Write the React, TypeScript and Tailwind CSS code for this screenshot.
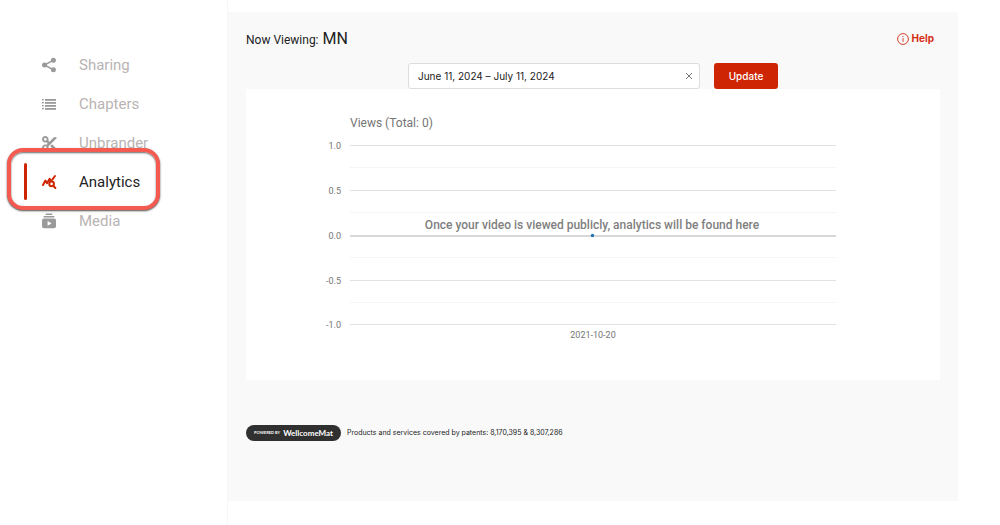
import React from "react";
import { FaScissors } from "react-icons/fa6";

function ShareIcon() {
  return (
    <svg viewBox="0 0 16 16" className="size-4" fill="currentColor" aria-hidden="true">
      <path d="M12.500 3.200L3.500 8l9 4.800" fill="none" stroke="currentColor" strokeWidth="1.500" />
      <circle cx="12.400" cy="3.300" r="2.500" />
      <circle cx="3.500" cy="8" r="2.500" />
      <circle cx="12.400" cy="12.800" r="2.500" />
    </svg>
  );
}

function ChaptersIcon() {
  return (
    <svg viewBox="0 0 16 12" className="h-3 w-4" fill="currentColor" aria-hidden="true">
      {[1, 4, 7, 10].map((y) => (
        <g key={y}>
          <rect x="1" y={y} width="1.8" height="1.4" />
          <rect x="4" y={y} width="11" height="1.8" />
        </g>
      ))}
    </svg>
  );
}

function AnalyticsIcon() {
  return (
    <svg
      viewBox="0 0 16 16"
      className="size-4"
      fill="none"
      stroke="currentColor"
      strokeWidth="2"
      strokeLinecap="round"
      strokeLinejoin="round"
      aria-hidden="true"
    >
      <path d="M2 11l2.4-4.4 1.6 2.6 2.6-4.4.8 1.4" />
      <path d="M11 6l3-4" />
      <circle cx="10.6" cy="9.9" r="2.3" />
      <path d="M12.4 11.8l2 2.2" />
    </svg>
  );
}

function MediaIcon() {
  return (
    <svg viewBox="0 0 16 16" className="size-4" fill="currentColor" aria-hidden="true">
      <rect x="4.5" y="0.5" width="7" height="1.4" rx="0.7" />
      <rect x="2.5" y="3" width="11" height="1.5" rx="0.7" />
      <path
        fillRule="evenodd"
        d="M3 5.6h10a2 2 0 0 1 2 2v5.6a2 2 0 0 1-2 2H3a2 2 0 0 1-2-2V7.6a2 2 0 0 1 2-2zM6.6 8v4.8l4-2.4z"
      />
    </svg>
  );
}

const items = [
  { label: "Sharing", icon: <ShareIcon /> },
  { label: "Chapters", icon: <ChaptersIcon /> },
  { label: "Unbrander", icon: <FaScissors size={15} /> },
  { label: "Analytics", icon: <AnalyticsIcon />, active: true },
  { label: "Media", icon: <MediaIcon /> },
];

const gridLines = [
  { y: 57, label: "1.0" },
  { y: 79 },
  { y: 102, label: "0.5" },
  { y: 124 },
  { y: 147, label: "0.0" },
  { y: 169 },
  { y: 192, label: "-0.5" },
  { y: 214 },
  { y: 236, label: "-1.0" },
];

function Sidebar() {
  return (
    <nav className="w-[228px] shrink-0 border-r border-[#f7f7f7] pt-[46px]">
      <ul className="grid auto-rows-[39px]">
        {items.map((item) => (
          <li key={item.label} className={item.active ? "relative" : ""}>
            {item.active && (
              <>
                {/* Highlight ring, overlaps the neighbouring rows */}
                <span className="absolute -top-[15px] -bottom-2 left-[7px] w-[153px] rounded-[16px] border-4 border-[#f55a50] bg-white shadow-[0_1px_2px_rgba(0,0,0,0.7),inset_0_1px_2px_rgba(0,0,0,0.6)]" />
                <span className="absolute top-0 bottom-0.5 left-6 w-[3px] rounded-full bg-[#ce2604]" />
              </>
            )}
            <a
              href="#"
              className={
                item.active
                  ? "relative flex h-[38px] items-center pl-[41px] text-[#222222]"
                  : "flex h-[38px] items-center pl-[41px] text-[#b9b3b3]"
              }
            >
              <span className={item.active ? "flex w-[38px] text-[#ce2604]" : "flex w-[38px] text-[#9a9a9a]"}>
                <span className="flex w-4 justify-center">{item.icon}</span>
              </span>
              <span className="text-[15px]">{item.label}</span>
            </a>
          </li>
        ))}
      </ul>
    </nav>
  );
}

function ViewsChart() {
  return (
    <svg viewBox="0 0 694 291" className="block w-full bg-white" role="img" aria-label="Views">
      <text x="104" y="38" fontSize="12" fill="#757575">
        Views (Total: 0)
      </text>
      {gridLines.map((line) => (
        <g key={line.y}>
          <rect
            x="104"
            y={line.y - 1}
            width="486"
            height={line.y === 147 ? 2 : 1}
            fill={line.y === 147 ? "#d8d8d8" : line.label ? "#e2e2e2" : "#f5f5f5"}
          />
          {line.label && (
            <text x="95" y={line.y + 3} fontSize="9" textAnchor="end" fill="#757575">
              {line.label}
            </text>
          )}
        </g>
      ))}
      <text x="346" y="140" fontSize="12" fontWeight="500" textAnchor="middle" fill="#808080">
        Once your video is viewed publicly, analytics will be found here
      </text>
      <circle cx="346.5" cy="146.5" r="1.7" fill="#1b73b8" />
      <text x="347" y="249" fontSize="9" textAnchor="middle" fill="#757575">
        2021-10-20
      </text>
    </svg>
  );
}

export default function App() {
  return (
    <div className="flex min-h-screen bg-white font-['Roboto',sans-serif]">
      <Sidebar />

      <main className="mt-3 mr-[42px] mb-6 flex-1 bg-[#f9f9f9] px-[18px] text-[#222222]">
        <div className="flex h-[51px] items-center justify-between pt-0.5 pr-1.5">
          <h1 className="flex items-baseline gap-1 text-[12px]">
            Now Viewing: <span className="text-base">MN</span>
          </h1>
          <a href="#" className="flex items-center gap-[3px] font-['Inter',sans-serif] text-[10px] font-bold text-[#d52b14]">
            <svg viewBox="0 0 12 12" className="size-3" fill="none" stroke="currentColor" aria-hidden="true">
              <circle cx="6" cy="6" r="5.4" strokeWidth="0.9" />
              <path d="M6 5.2v3.6M6 3v1.1" strokeWidth="0.9" />
            </svg>
            Help
          </a>
        </div>

        <form className="flex h-[26px] justify-center gap-3.5 font-['Inter',sans-serif] text-[10px]" onSubmit={(e) => e.preventDefault()}>
          <div className="relative w-[292px]">
            <input
              type="text"
              aria-label="Date range"
              defaultValue="June 11, 2024 – July 11, 2024"
              className="h-full w-full rounded-[3px] border border-[#dddddd] bg-white pr-6 pl-[9px] text-[#222222]"
            />
            <button type="button" aria-label="Clear dates" className="absolute inset-y-0 right-[7px] flex items-center text-[#777777]">
              <svg viewBox="0 0 8 8" className="size-2" stroke="currentColor" aria-hidden="true">
                <path d="M1 1l6 6M7 1L1 7" />
              </svg>
            </button>
          </div>
          <button type="submit" className="w-16 rounded-[3px] bg-[#ce2604] font-medium text-white">
            Update
          </button>
        </form>

        <ViewsChart />

        <footer className="mt-[45px] flex items-start gap-1.5 pb-[59px] font-['Inter',sans-serif]">
          <div className="flex h-4 w-[95px] items-center justify-center gap-[3px] rounded-full bg-[#303030] text-white">
            <span className="font-['Lato',sans-serif] text-[4px] font-bold">POWERED BY</span>
            <span className="font-['Lato',sans-serif] text-[8px] font-bold">WellcomeMat</span>
          </div>
          <p className="text-[7px] leading-4">Products and services covered by patents: 8,170,395 &amp; 8,307,286</p>
        </footer>
      </main>
    </div>
  );
}
